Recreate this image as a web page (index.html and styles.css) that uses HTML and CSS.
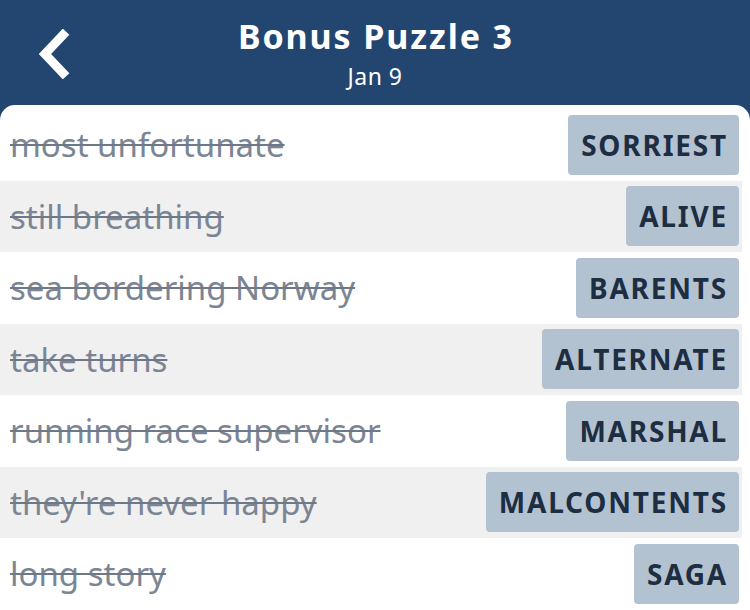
FILE: index.html
```html
<!DOCTYPE html>
<html>
<head>
<meta charset="utf-8">
<link rel="stylesheet" href="styles.css">
</head>
<body>
<header class="topbar">
  <button class="back" aria-label="Back">
    <svg width="34" height="50" viewBox="0 0 34 50"><path d="M27 6 L9 25 L27 44" fill="none" stroke="#fff" stroke-width="9" stroke-linecap="square" stroke-linejoin="miter"/></svg>
  </button>
  <div class="titles">
    <h1 class="title">Bonus Puzzle 3</h1>
    <div class="date">Jan 9</div>
  </div>
</header>
<main class="card">
  <div class="row"><span class="clue">most unfortunate</span><span class="answer">SORRIEST</span></div>
  <div class="row alt"><span class="clue">still breathing</span><span class="answer">ALIVE</span></div>
  <div class="row"><span class="clue">sea bordering Norway</span><span class="answer">BARENTS</span></div>
  <div class="row alt"><span class="clue">take turns</span><span class="answer">ALTERNATE</span></div>
  <div class="row"><span class="clue">running race supervisor</span><span class="answer">MARSHAL</span></div>
  <div class="row alt"><span class="clue">they're never happy</span><span class="answer">MALCONTENTS</span></div>
  <div class="row"><span class="clue">long story</span><span class="answer">SAGA</span></div>
</main>
</body>
</html>
```
FILE: styles.css
```css
* { box-sizing: border-box; }
html, body { margin: 0; padding: 0; }
body {
  background: #22466f;
  font-family: "Noto Sans", Lato, sans-serif;
  width: 750px;
  height: 610px;
  overflow: hidden;
}
.topbar {
  height: 105px;
  position: relative;
  display: flex;
  justify-content: center;
  color: #fff;
}
.back {
  position: absolute;
  left: 36px;
  top: 29px;
  background: none;
  border: 0;
  padding: 0;
  display: block;
}
.back svg { display: block; }
.titles {
  display: flex;
  flex-direction: column;
  align-items: center;
  padding-top: 14px;
}
.title {
  margin: 0;
  font-size: 34px;
  font-weight: 700;
  line-height: 44px;
  letter-spacing: 1.9px;
  margin-right: -1.9px;
}
.date {
  font-size: 23px;
  line-height: 28px;
  margin-top: 4px;
  letter-spacing: 0.5px;
}
.card {
  background: #fff;
  border-radius: 15px 15px 0 0;
  padding-top: 4px;
  height: 505px;
}
.row {
  height: 71.5px;
  display: flex;
  align-items: center;
  justify-content: space-between;
  padding: 0 11px 0 10px;
  margin-right: 8px;
}
.row.alt { background: #f0f0f0; }
.clue {
  font-size: 33px;
  color: #7b8594;
  text-decoration: line-through;
  text-decoration-color: #6e7886;
  text-decoration-thickness: 2px;
}
.answer {
  background: #b2c2d0;
  color: #1d2d42;
  font-weight: 700;
  font-size: 28px;
  letter-spacing: 1.8px;
  height: 60px;
  line-height: 60px;
  padding: 0 11px 0 13px;
  border-radius: 4px;
  margin-right: -8px;
}
```
